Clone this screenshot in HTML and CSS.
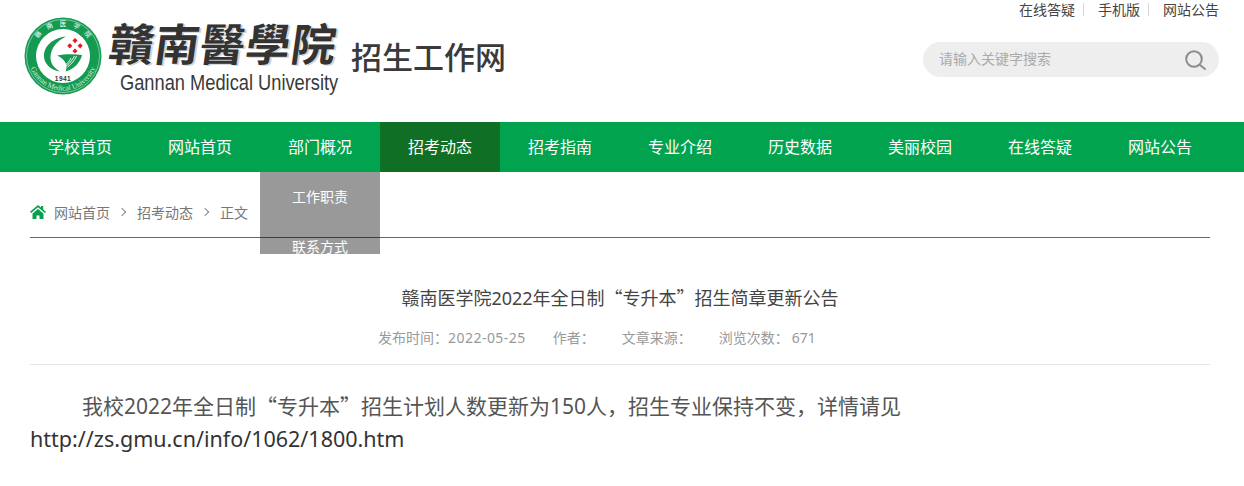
FILE: index.html
```html
<!DOCTYPE html>
<html lang="zh-CN">
  <head>
    <meta charset="UTF-8" />
    <title>赣南医学院招生工作网</title>
    <link rel="stylesheet" href="styles.css">
  </head>
  <body>
    <!-- 顶部 -->
    <div class="header">
      <div class="logo">
        <svg class="seal" width="78" height="78" viewBox="0 0 78 78">
          <defs>
            <path id="sealTop" d="M8.5 39a30.5 30.5 0 0 1 61 0" />
            <path id="sealBottom" d="M4.5 39a34.5 34.5 0 0 0 69 0" />
          </defs>
          <circle cx="39" cy="39" r="38.5" fill="#159a52" />
          <circle cx="39" cy="39" r="36.5" fill="none" stroke="#bfe6cf" stroke-width="0.6" />
          <circle cx="39" cy="39" r="27" fill="#fff" />
          <text class="seal-cn"><textPath href="#sealTop" startOffset="50%" text-anchor="middle">赣　南　医　学　院</textPath></text>
          <text class="seal-en"><textPath href="#sealBottom" startOffset="50%" text-anchor="middle">Gannan Medical University</textPath></text>
          <!-- G -->
          <path d="M42 19.5C29 21 19.5 29 20 39.5c.4 8 7 13.5 16 15-6-3.5-10-8.5-9.5-15C27 31 33 24 42 19.5z" fill="#159a52" />
          <!-- 麦穗 -->
          <path d="M33 38.5c8-1.500 17-1.500 25-.5-1.500 7-8 14.500-16.500 16.500 1.500-3.500 1.500-6.500-.5-9.500-1.800-2.800-4.500-4.800-8-6.500z" fill="#159a52" />
          <path d="M39 51c5-2.500 9-7 11.500-12M43.500 50c4-3 7-6.500 9-11M47 41c-1.500 3-3.500 5.500-6 7.500" stroke="#fff" stroke-width="0.9" fill="none" />
          <!-- 红十字 -->
          <path d="M51 21l2.600 2.600-2.600 2.600-2.600-2.600zM45.800 26.200l2.600 2.600-2.600 2.600-2.600-2.600zM56.200 26.200l2.600 2.600-2.600 2.600-2.600-2.600zM51 31.400l2.600 2.600-2.600 2.600-2.600-2.600z" fill="#e01f26" />
          <text class="seal-year" x="39" y="63.500" text-anchor="middle">1941</text>
        </svg>
        <div class="logo-name">
          <div class="logo-cn">贛南醫學院</div>
          <div class="logo-en">Gannan Medical University</div>
        </div>
        <div class="logo-sub">招生工作网</div>
      </div>
      <div class="header-right">
        <div class="top-links">
          <a>在线答疑</a><span class="sep"></span><a>手机版</a><span class="sep"></span><a>网站公告</a>
        </div>
        <div class="search">
          <span class="search-text">请输入关键字搜索</span>
          <svg width="22" height="20" viewBox="0 0 22 20" fill="none" stroke="#8c8c8c" stroke-width="2">
            <circle cx="9" cy="9" r="7.800" />
            <path d="M15 15l5 4" stroke-linecap="round" />
          </svg>
        </div>
      </div>
    </div>

    <!-- 导航 -->
    <div class="nav">
      <div class="nav-item">学校首页</div>
      <div class="nav-item">网站首页</div>
      <div class="nav-item has-sub">
        部门概况
        <div class="sub-menu">
          <div class="sub-item">工作职责</div>
          <div class="sub-item">联系方式</div>
        </div>
      </div>
      <div class="nav-item active">招考动态</div>
      <div class="nav-item">招考指南</div>
      <div class="nav-item">专业介绍</div>
      <div class="nav-item">历史数据</div>
      <div class="nav-item">美丽校园</div>
      <div class="nav-item">在线答疑</div>
      <div class="nav-item">网站公告</div>
    </div>

    <!-- 正文 -->
    <div class="main">
      <div class="crumbs">
        <svg class="home" width="16" height="14" viewBox="0 0 16 14">
          <path d="M8 0l3 2.500V1h2.200v3.400L16 6.800l-1.100 1.300L8 2.300 1.100 8.100 0 6.800zM2.500 8.600L8 4l5.500 4.600V14H9.500v-3.500h-3V14h-4z" fill="#0aa14e" />
        </svg>
        <span>网站首页</span><i></i><span>招考动态</span><i></i><span>正文</span>
      </div>
      <h1 class="title">赣南医学院<span class="num">2022</span>年全日制“专升本”招生简章更新公告</h1>
      <div class="meta">
        <span>发布时间：<span class="num date">2022-05-25</span></span>
        <span>作者：</span>
        <span>文章来源：</span>
        <span>浏览次数：&nbsp;<span class="num">671</span></span>
      </div>
      <div class="content">
        <p>我校<span class="num">2022</span>年全日制“专升本”招生计划人数更新为<span class="num">150</span>人，招生专业保持不变，详情请见<br /><a>http://zs.gmu.cn/info/1062/1800.htm</a></p>
      </div>
    </div>
  </body>
</html>
```

FILE: styles.css
```css
* {
  box-sizing: border-box;
  margin: 0;
  padding: 0;
}

body {
  font-family: "Noto Sans CJK SC", "Noto Sans", sans-serif;
  background-color: #fff;
  color: #333;
  overflow: hidden;
}

.num {
  font-family: "Noto Sans", sans-serif;
}

/* 顶部 */
.header {
  height: 122px;
  display: flex;
  justify-content: space-between;
  padding: 0 25px 0 24px;
}

.logo {
  display: flex;
  align-items: flex-start;
  padding-top: 17px;
}

.seal-cn {
  font-size: 6.500px;
  fill: #fff;
}

.seal-en {
  font-family: "Liberation Serif", serif;
  font-size: 7.500px;
  fill: #d5efdf;
}

.seal-year {
  font-family: "Liberation Sans", sans-serif;
  font-size: 6.500px;
  font-weight: bold;
  letter-spacing: 0.5px;
  fill: #333;
}

.logo-name {
  margin-left: 8px;
  width: 229px;
}

.logo-cn {
  font-family: "Noto Sans CJK TC", sans-serif;
  font-weight: 700;
  font-size: 44.500px;
  line-height: 50px;
  letter-spacing: 1px;
  color: #333;
  transform: skewX(-8deg);
  text-shadow: 2px 1px 0 #d4d4d4;
  white-space: nowrap;
}

.logo-en {
  font-family: "Liberation Sans", sans-serif;
  font-size: 22px;
  line-height: 26px;
  margin: 3px 0 0 10px;
  color: #3a3a3a;
  transform: scaleX(0.83);
  transform-origin: left;
  white-space: nowrap;
}

.logo-sub {
  font-size: 31px;
  font-weight: 500;
  line-height: 40px;
  margin: 19px 0 0 12px;
  color: #3a3a3a;
}

.header-right {
  width: 300px;
  display: flex;
  flex-direction: column;
  align-items: flex-end;
}

.top-links {
  display: flex;
  align-items: center;
  font-size: 14px;
  line-height: 18px;
  color: #444;
}

.sep {
  width: 1px;
  height: 13px;
  margin: 0 14px 0 8px;
  background-color: #d8d8d8;
}

.search {
  width: 296px;
  height: 35px;
  margin-top: 24px;
  padding: 0 12px 0 16px;
  background-color: #eee;
  border-radius: 18px;
  display: flex;
  justify-content: space-between;
  align-items: center;
  font-size: 14px;
  color: #aaa;
}

.search-text {
  margin-bottom: 4px;
}

/* 导航 */
.nav {
  height: 50px;
  padding-left: 20px;
  display: flex;
  background-color: #02a34f;
}

.nav-item {
  position: relative;
  width: 120px;
  line-height: 48px;
  text-align: center;
  font-size: 16px;
  color: #fff;
}

.nav-item.active {
  background-color: #0f6f25;
}

.sub-menu {
  position: absolute;
  z-index: 10;
  top: 50px;
  left: 0;
  width: 120px;
  height: 82px;
  overflow: hidden;
  background-color: rgba(0, 0, 0, 0.4);
}

.sub-item {
  height: 50px;
  font-size: 14px;
  line-height: 48px;
}

/* 正文 */
.main {
  padding: 0 34px 0 30px;
}

.crumbs {
  height: 66px;
  padding-top: 14px;
  display: flex;
  align-items: center;
  border-bottom: 1px solid #02a34f;
  font-size: 14px;
  line-height: 18px;
  color: #777;
}

.home {
  margin-right: 8px;
  margin-top: 1px;
}

.crumbs i {
  width: 6px;
  height: 6px;
  margin: 1px 12.500px 0 8.500px;
  border-top: 1px solid #888;
  border-right: 1px solid #888;
  transform: rotate(45deg);
}

.title {
  margin-top: 46px;
  margin-bottom: 2px;
  font-size: 18px;
  font-weight: normal;
  line-height: 26px;
  text-align: center;
  color: #444;
}

.meta {
  height: 52px;
  padding: 14px 46px 0 0;
  display: flex;
  justify-content: center;
  gap: 27px;
  border-bottom: 1px solid #e5e5e5;
  font-size: 14px;
  line-height: 20px;
  color: #999;
}

.date {
  letter-spacing: 0.45px;
}

.content {
  padding-top: 24px;
  font-size: 21px;
  line-height: 32px;
  color: #555;
}

.content p {
  text-indent: 52px;
}

.content a {
  font-family: "Noto Sans", sans-serif;
  font-size: 21.500px;
  color: #333;
}
```
